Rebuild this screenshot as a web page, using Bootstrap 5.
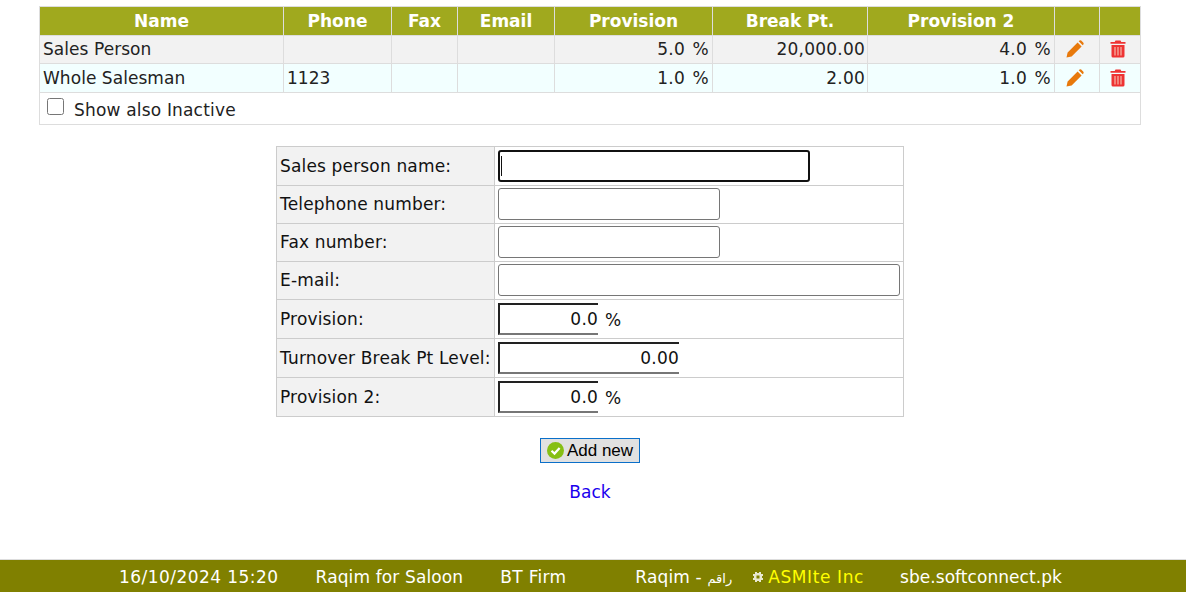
<!DOCTYPE html>
<html lang="en">
<head>
<meta charset="utf-8">
<title>Sales Persons</title>
<link href="https://cdn.jsdelivr.net/npm/bootstrap@5.3.0/dist/css/bootstrap.min.css" rel="stylesheet">
<style>
html,body{height:592px;overflow:hidden}
body{font-family:"DejaVu Sans","Liberation Sans",sans-serif;font-size:17px;line-height:20px;color:#222;background:#fff;display:flex;flex-direction:column}
.sheet{flex:1 1 auto;padding:6px 45px 0 39px}
.grid-list{width:1102px;table-layout:fixed;border-collapse:collapse;border:1px solid #ddd}
.grid-list th,.grid-list td{border:1px solid #ddd;padding:0 3px;white-space:nowrap}
.grid-list th{background:#a0a91e;color:#fff;font-weight:700;text-align:center;height:28.5px;border-color:#ddd}
.grid-list td{height:28.5px;letter-spacing:.05px}
.grid-list .row-a td{height:28px}
.grid-list .row-b td{height:29px}
.row-a td{background:#f2f2f2}
.row-b td{background:#f2ffff}
.grid-list .foot-cell{background:#fff;height:32px;padding:4px 8px 0 7px;letter-spacing:.18px}
.c1{width:244px}.c2{width:108px}.c3{width:66px}.c4{width:97px}.c5{width:158px}.c6{width:155px}.c7{width:187px}.c8{width:45px}.c9{width:41px}
.grid-list .num{text-align:right;letter-spacing:.22px;padding-right:2px}
.grid-list .pct{word-spacing:2px;padding-right:3px}
.grid-list .ico{text-align:center;padding:0 4px 0 0}
.ico svg{display:block;margin:0 auto}
.inactive{display:flex;align-items:center;gap:10px}
.inactive input{appearance:auto;width:17px;height:17px;margin:0 0 7px 0;accent-color:#555}
.entry{width:628px;margin:21px 0 0 237px;border-collapse:collapse;border:1px solid #ccc;table-layout:fixed;color:#111}
.entry td{border:1px solid #ccc;padding:0 3px 1px;height:38px;white-space:nowrap}
.entry .tall td{height:39px;padding:0 3px}
.entry .tall .lbl{padding-top:1px}
.entry .first .lbl{padding-top:0}
.entry .lbl{background:#f2f2f2;width:218px;letter-spacing:.16px}
.fld{display:block;height:32px;font:inherit;color:#111;background:#fff;border:1px solid #767676;border-radius:3px;padding:0 2px;outline:0}
.w-name{width:312px;border:2px solid #111;border-radius:3px;background-image:linear-gradient(#111,#111);background-repeat:no-repeat;background-size:1px 20px;background-position:1px 4px}
.w-tel{width:222px}
.w-mail{width:402px}
.numf{display:inline-block;height:32px;font:inherit;letter-spacing:.2px;color:#111;text-align:right;background:#fff;border-style:solid;border-width:2px 0 2px 2px;border-color:#222 #767676 #767676 #222;border-radius:0;padding:1px 0 0;outline:0;vertical-align:middle}
.w-pct{width:100px}
.w-brk{width:181px}
.unit{margin-left:7px;font-size:17px;vertical-align:middle;position:relative;top:1px}
.actions{display:flex;flex-direction:column;align-items:center;width:628px;margin-left:237px}
.add-btn{width:100px;height:25px;margin-top:21px;padding:1px 0 0;display:flex;align-items:center;justify-content:center;gap:3px;font-family:"Liberation Sans",sans-serif;font-size:17px;line-height:20px;color:#000;background:#e1e1e1;border:1px solid #0a6fc9;border-radius:0}
.add-btn:hover{background:#e1e1e1;color:#000;border-color:#0a6fc9}
.back-link{margin-top:19px;color:#1a00ee;text-decoration:none}
.status{flex:0 0 33px;display:flex;align-items:center;background:#808000;border-top:1px solid #ddd;color:#fff;padding:1px 0 0 119px;white-space:nowrap}
.s1{margin-right:37px;letter-spacing:.45px}.s2{margin-right:37px;letter-spacing:.13px}.s3{margin-right:69px;letter-spacing:.3px}.s4{margin-right:21px;letter-spacing:.15px}
.s4 span{font-size:13px;line-height:1}
.s5{margin-right:5px;display:block}
.s6{color:#ff0;margin-right:36px;letter-spacing:.6px}
.s7{letter-spacing:.06px}
</style>
</head>
<body>
<div class="sheet">
<table class="grid-list">
<colgroup><col class="c1"><col class="c2"><col class="c3"><col class="c4"><col class="c5"><col class="c6"><col class="c7"><col class="c8"><col class="c9"></colgroup>
<thead><tr><th>Name</th><th>Phone</th><th>Fax</th><th>Email</th><th>Provision</th><th>Break Pt.</th><th>Provision 2</th><th></th><th></th></tr></thead>
<tbody>
<tr class="row-a"><td>Sales Person</td><td></td><td></td><td></td><td class="num pct">5.0 %</td><td class="num">20,000.00</td><td class="num pct">4.0 %</td>
<td class="ico"><svg width="18" height="18" viewBox="0 0 18 18" aria-hidden="true"><path fill="#e8790c" d="M0.5 17.5 L1.6 12.4 L11.6 2.4 L15.6 6.4 L5.6 16.4 Z M12.7 1.3 L13.6 0.6 Q14.4 0 15.2 0.6 L17.4 2.8 Q18 3.6 17.4 4.4 L16.7 5.3 Z"/></svg></td>
<td class="ico"><svg width="16" height="18" viewBox="0 0 16 18" aria-hidden="true"><path fill="#ee3333" d="M5.5 0.5 H10.5 L11.3 2 H15.5 V3.8 H0.5 V2 H4.7 Z M1.5 5 H14.5 V16 Q14.5 17.5 13 17.5 H3 Q1.5 17.5 1.5 16 Z"/><path stroke="#f5b8a8" stroke-width="1.2" d="M5 7 V15.5 M8 7 V15.5 M11 7 V15.5"/></svg></td></tr>
<tr class="row-b"><td>Whole Salesman</td><td>1123</td><td></td><td></td><td class="num pct">1.0 %</td><td class="num">2.00</td><td class="num pct">1.0 %</td>
<td class="ico"><svg width="18" height="18" viewBox="0 0 18 18" aria-hidden="true"><path fill="#e8790c" d="M0.5 17.5 L1.6 12.4 L11.6 2.4 L15.6 6.4 L5.6 16.4 Z M12.7 1.3 L13.6 0.6 Q14.4 0 15.2 0.6 L17.4 2.8 Q18 3.6 17.4 4.4 L16.7 5.3 Z"/></svg></td>
<td class="ico"><svg width="16" height="18" viewBox="0 0 16 18" aria-hidden="true"><path fill="#ee3333" d="M5.5 0.5 H10.5 L11.3 2 H15.5 V3.8 H0.5 V2 H4.7 Z M1.5 5 H14.5 V16 Q14.5 17.5 13 17.5 H3 Q1.5 17.5 1.5 16 Z"/><path stroke="#f5b8a8" stroke-width="1.2" d="M5 7 V15.5 M8 7 V15.5 M11 7 V15.5"/></svg></td></tr>
<tr><td class="foot-cell" colspan="9"><label class="inactive"><input type="checkbox"><span>Show also Inactive</span></label></td></tr>
</tbody>
</table>

<table class="entry">
<colgroup><col class="lbl"><col></colgroup>
<tbody>
<tr class="tall first"><td class="lbl">Sales person name:</td><td><input class="fld w-name" type="text"></td></tr>
<tr><td class="lbl">Telephone number:</td><td><input class="fld w-tel" type="text"></td></tr>
<tr><td class="lbl">Fax number:</td><td><input class="fld w-tel" type="text"></td></tr>
<tr><td class="lbl">E-mail:</td><td><input class="fld w-mail" type="text"></td></tr>
<tr class="tall"><td class="lbl">Provision:</td><td><input class="numf w-pct" type="text" value="0.0"><span class="unit">%</span></td></tr>
<tr class="tall"><td class="lbl">Turnover Break Pt Level:</td><td><input class="numf w-brk" type="text" value="0.00"></td></tr>
<tr class="tall"><td class="lbl">Provision 2:</td><td><input class="numf w-pct" type="text" value="0.0"><span class="unit">%</span></td></tr>
</tbody>
</table>

<div class="actions">
<button type="button" class="btn add-btn"><svg width="17" height="17" viewBox="0 0 17 17" aria-hidden="true"><circle cx="8.5" cy="8.5" r="8.5" fill="#86bf14"/><path d="M4.5 8.8 L7.5 11.6 L12.6 6" fill="none" stroke="#fff" stroke-width="2.2"/></svg><span>Add new</span></button>
<a class="back-link" href="#">Back</a>
</div>
</div>
<div class="status">
<span class="s1">16/10/2024 15:20</span>
<span class="s2">Raqim for Saloon</span>
<span class="s3">BT Firm</span>
<span class="s4">Raqim - <span lang="ar">راقم</span></span>
<svg class="s5" width="10" height="10" viewBox="0 0 10 10" aria-hidden="true"><path fill="#e8e8d0" d="M2 0h2v1h2V0h2v2h2v2H9v2h1v2H8v2H6V9H4v1H2V8H0V6h1V4H0V2h2z"/><rect x="3.5" y="3.5" width="3" height="3" fill="#808000"/></svg>
<span class="s6">ASMIte Inc</span>
<span class="s7">sbe.softconnect.pk</span>
</div>
</body>
</html>
